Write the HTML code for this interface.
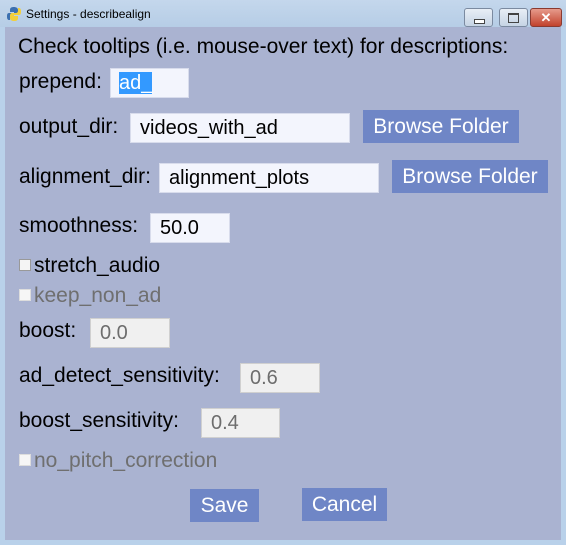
<!DOCTYPE html>
<html><head><style>
body{margin:0;width:566px;height:545px;overflow:hidden;background:#b9d1ea;font-family:"Liberation Sans",Arial,sans-serif;position:relative}
.tb{position:absolute;left:0;top:0;width:566px;height:27px;background:linear-gradient(#c4d7ec,#b6cde6)}
.title{position:absolute;left:26px;top:7px;font-size:12px;color:#000}
.c{position:absolute;left:5px;top:27px;width:556px;height:513px;background:#aab3d1}
.l{position:absolute;font-size:21px;line-height:24px;color:#000;white-space:nowrap}
.g{color:#6f6f6f}
.e{position:absolute;background:#f3f5fd;border:1px solid #d8dcec;font-size:20px;line-height:28px;padding-left:9px;box-sizing:border-box;height:30px}
.d{background:#f0f0f0;color:#6d6d6d;border-color:#d0d0d0}
.b{position:absolute;background:#6f86c6;color:#fff;font-size:21px;text-align:center;line-height:33px;height:33px}
.cb{position:absolute;width:10px;height:10px;background:#f4f4f4;border:1px solid #999}
.wb{position:absolute;top:8px;height:17px;border:1px solid #7b8aa0;border-radius:3px;background:linear-gradient(#e8eef6,#c6d4e5)}
</style></head><body>
<div class="tb">
<svg style="position:absolute;left:6px;top:6px" width="16" height="16"><path d="M8 1c-3 0-4 1-4 3v2h4v1H3c-2 0-2 2-2 4s1 3 2 3h1v-3c0-1 1-2 2-2h4c1 0 2-1 2-2V4c0-2-2-3-4-3z" fill="#3b6fb0"/><path d="M8 15c3 0 4-1 4-3v-2H8V9h5c2 0 2-2 2-4s-1-3-2-3h-1v3c0 1-1 2-2 2H6c-1 0-2 1-2 2v3c0 2 2 3 4 3z" fill="#f2cf3c"/></svg>
<div class="title">Settings - describealign</div>
<div class="wb" style="left:464px;width:27px"><div style="position:absolute;left:9px;top:10px;width:9px;height:3px;border:1px solid #444;background:#fff"></div></div>
<div class="wb" style="left:499px;width:27px"><div style="position:absolute;left:8px;top:4px;width:9px;height:7px;border:1px solid #444;border-top-width:2px"></div></div>
<div class="wb" style="left:530px;width:30px;background:linear-gradient(#e69b8c,#c2422c);border-color:#8a3a30;color:#fff;font-size:13px;font-weight:bold;text-align:center;line-height:17px">✕</div>
</div>
<div class="c"></div>
<div class="l" style="left:18px;top:35px">Check tooltips (i.e. mouse-over text) for descriptions:</div>
<div class="l" style="left:19px;top:70px">prepend:</div>
<div class="e" style="left:110px;top:68px;width:79px;padding-left:8px"><span style="background:#3399ff;color:#fff">ad_</span></div>
<div class="l" style="left:19px;top:115px">output_dir:</div>
<div class="e" style="left:130px;top:113px;width:220px">videos_with_ad</div>
<div class="b" style="left:363px;top:110px;width:156px">Browse Folder</div>
<div class="l" style="left:19px;top:165px">alignment_dir:</div>
<div class="e" style="left:159px;top:163px;width:220px">alignment_plots</div>
<div class="b" style="left:392px;top:160px;width:156px">Browse Folder</div>
<div class="l" style="left:19px;top:214px">smoothness:</div>
<div class="e" style="left:150px;top:213px;width:80px">50.0</div>
<div class="cb" style="left:19px;top:259px"></div>
<div class="l" style="left:34px;top:254px">stretch_audio</div>
<div class="cb" style="left:19px;top:289px;border-color:#ddd;background:#f6f6f6"></div>
<div class="l g" style="left:34px;top:284px">keep_non_ad</div>
<div class="l" style="left:19px;top:319px">boost:</div>
<div class="e d" style="left:90px;top:318px;width:80px">0.0</div>
<div class="l" style="left:19px;top:364px">ad_detect_sensitivity:</div>
<div class="e d" style="left:240px;top:363px;width:80px">0.6</div>
<div class="l" style="left:19px;top:409px">boost_sensitivity:</div>
<div class="e d" style="left:201px;top:408px;width:79px">0.4</div>
<div class="cb" style="left:19px;top:454px;border-color:#ddd;background:#f6f6f6"></div>
<div class="l g" style="left:34px;top:449px">no_pitch_correction</div>
<div class="b" style="left:190px;top:489px;width:69px">Save</div>
<div class="b" style="left:302px;top:488px;width:85px">Cancel</div>
</body></html>
